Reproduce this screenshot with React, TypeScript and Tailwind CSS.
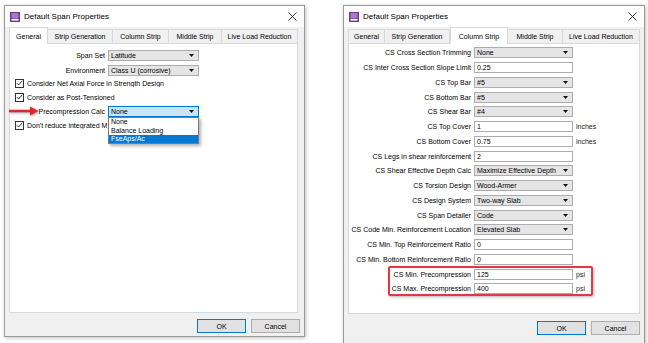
import React from "react";

const txt = "text-[7px] leading-none text-black";

function AppIcon() {
  return (
    <svg width="10" height="10" viewBox="0 0 10 10" className="flex-shrink-0">
      <rect x="0" y="0" width="10" height="10" fill="#6f3591" />
      <rect x="1.5" y="1" width="7" height="5.5" fill="#a57cc0" />
      <rect x="1.5" y="7" width="7" height="1.6" fill="#ffffff" />
    </svg>
  );
}

function CloseX() {
  return (
    <svg width="9" height="9" viewBox="0 0 9 9" className="flex-shrink-0">
      <path d="M0.5 0.5l8 8M8.5 0.5l-8 8" stroke="#222" strokeWidth="0.9" />
    </svg>
  );
}

function Caret() {
  return (
    <svg width="5" height="3" viewBox="0 0 5 3" className="flex-shrink-0">
      <path d="M0 0h5L2.5 3z" fill="#111" />
    </svg>
  );
}

function Select({
  value,
  w,
  focus,
}: {
  value: string;
  w: string;
  focus?: boolean;
}) {
  return (
    <div
      className={`flex h-[11px] items-center justify-between border pl-[2px] pr-[4px] ${
        focus ? "border-[#0078d7] bg-[#cce4f7]" : "border-[#adadad] bg-[#e5e5e5]"
      } ${w}`}
    >
      <span className={txt}>{value}</span>
      <Caret />
    </div>
  );
}

function TextBox({ value, w }: { value: string; w: string }) {
  return (
    <div className={`flex h-[11px] items-center border border-[#adadad] bg-white pl-[2px] ${w}`}>
      <span className={txt}>{value}</span>
    </div>
  );
}

function Checkbox({ label, clip }: { label: string; clip?: string }) {
  return (
    <div className="flex h-[12px] items-center gap-[3px] pl-[5px]">
      <div className="flex h-[9px] w-[9px] items-center justify-center border border-[#333] bg-white">
        <svg width="7" height="6" viewBox="0 0 7 6">
          <path d="M0.8 3.2l1.8 1.8L6.3 0.8" fill="none" stroke="#222" strokeWidth="0.9" />
        </svg>
      </div>
      <span className={`${txt} overflow-hidden whitespace-nowrap ${clip ?? ""}`}>{label}</span>
    </div>
  );
}

function TitleBar() {
  return (
    <div className="flex h-[21px] items-center bg-white pl-[5px] pr-[7px]">
      <AppIcon />
      <span className="ml-[4px] text-[8px] leading-none text-black">Default Span Properties</span>
      <div className="ml-auto">
        <CloseX />
      </div>
    </div>
  );
}

function Tabs({ tabs, active }: { tabs: [string, string][]; active: number }) {
  return (
    <div className="flex h-[16px] items-end">
      {tabs.map(([label, w], i) =>
        i === active ? (
          <div
            key={label}
            className={`relative z-10 -mb-px flex h-[17px] items-center justify-center border border-b-0 border-[#d9d9d9] bg-white ${w}`}
          >
            <span className={txt}>{label}</span>
          </div>
        ) : (
          <div
            key={label}
            className={`flex h-[14px] items-center justify-center border border-b-0 border-l-0 border-[#d9d9d9] bg-[#f0f0f0] first:border-l ${w}`}
          >
            <span className={`${txt} whitespace-nowrap`}>{label}</span>
          </div>
        )
      )}
    </div>
  );
}

function Button({ label, primary }: { label: string; primary?: boolean }) {
  return (
    <div
      className={`flex h-[14px] w-[49px] items-center justify-center bg-[#e1e1e1] ${
        primary ? "border-[1.5px] border-[#0078d7]" : "border border-[#adadad]"
      }`}
    >
      <span className={txt}>{label}</span>
    </div>
  );
}

function GeneralPanel() {
  const labelCls = `${txt} w-[95px] text-right whitespace-nowrap`;
  return (
    <div className="flex flex-col pt-[5px]">
      <div className="flex h-[12px] items-center gap-[3px]">
        <span className={labelCls}>Span Set</span>
        <Select value="Latitude" w="w-[91px]" />
      </div>
      <div className="mt-[3px] flex h-[12px] items-center gap-[3px]">
        <span className={labelCls}>Environment</span>
        <Select value="Class U (corrosive)" w="w-[91px]" />
      </div>
      <div className="mt-[1px]">
        <Checkbox label="Consider Net Axial Force in Strength Design" />
      </div>
      <div className="mt-[2px]">
        <Checkbox label="Consider as Post-Tensioned" />
      </div>
      <div className="relative z-20 mt-[2px] flex h-[12px] items-center gap-[3px]">
        {/* red annotation arrow */}
        <svg
          width="30"
          height="10"
          viewBox="0 0 30 10"
          className="absolute left-[-1px] top-[1px] drop-shadow-[1px_1px_1px_rgba(0,0,0,0.35)]"
        >
          <path d="M0 3.8h21V0.5L29.5 5 21 9.5V6.2H0z" fill="#e3262c" />
        </svg>
        <span className={labelCls}>Precompression Calc</span>
        <div className="relative">
          <Select value="None" w="w-[91px]" focus />
          <div className="absolute left-0 top-full w-[91px] border border-[#7a7a7a] bg-white shadow-[2px_2px_3px_rgba(0,0,0,0.3)]">
            <div className={`${txt} flex h-[8.5px] items-center pl-[2px]`}>None</div>
            <div className={`${txt} flex h-[8.5px] items-center pl-[2px]`}>Balance Loading</div>
            <div className="flex h-[8.5px] items-center bg-[#0078d7] pl-[2px] text-[7px] leading-none text-white">
              FseAps/Ac
            </div>
          </div>
        </div>
      </div>
      <div className="mt-[2px]">
        <Checkbox label="Don't reduce integrated Moments" clip="w-[80px]" />
      </div>
    </div>
  );
}

type Row = { label: string; kind: "select" | "text"; value: string; unit?: string };

const csRows: Row[] = [
  { label: "CS Cross Section Trimming", kind: "select", value: "None" },
  { label: "CS Inter Cross Section Slope Limit", kind: "text", value: "0.25" },
  { label: "CS Top Bar", kind: "select", value: "#5" },
  { label: "CS Bottom Bar", kind: "select", value: "#5" },
  { label: "CS Shear Bar", kind: "select", value: "#4" },
  { label: "CS Top Cover", kind: "text", value: "1", unit: "inches" },
  { label: "CS Bottom Cover", kind: "text", value: "0.75", unit: "inches" },
  { label: "CS Legs in shear reinforcement", kind: "text", value: "2" },
  { label: "CS Shear Effective Depth Calc", kind: "select", value: "Maximize Effective Depth" },
  { label: "CS Torsion Design", kind: "select", value: "Wood-Armer" },
  { label: "CS Design System", kind: "select", value: "Two-way Slab" },
  { label: "CS Span Detailer", kind: "select", value: "Code" },
  { label: "CS Code Min. Reinforcement Location", kind: "select", value: "Elevated Slab" },
  { label: "CS Min. Top Reinforcement Ratio", kind: "text", value: "0" },
  { label: "CS Min. Bottom Reinforcement Ratio", kind: "text", value: "0" },
];

const precompRows: Row[] = [
  { label: "CS Min. Precompression", kind: "text", value: "125", unit: "psi" },
  { label: "CS Max. Precompression", kind: "text", value: "400", unit: "psi" },
];

function CsRow({ row }: { row: Row }) {
  return (
    <div className="flex h-[14.75px] items-center">
      <span className={`${txt} w-[122px] text-right whitespace-nowrap`}>{row.label}</span>
      <div className="ml-[3px]">
        {row.kind === "select" ? (
          <Select value={row.value} w="w-[99px]" />
        ) : (
          <TextBox value={row.value} w="w-[99px]" />
        )}
      </div>
      {row.unit && <span className="ml-[3px] text-[7px] leading-none text-[#222]">{row.unit}</span>}
    </div>
  );
}

function ColumnStripPanel() {
  return (
    <div className="flex flex-col pt-[1.6px]">
      {csRows.map((r) => (
        <CsRow key={r.label} row={r} />
      ))}
      <div className="relative">
        <div className="absolute left-[39px] top-[-0.5px] bottom-[0.5px] w-[205px] rounded-[2px] border-2 border-[#e3383d] shadow-[1px_1px_3px_rgba(0,0,0,0.3)]" />
        {precompRows.map((r) => (
          <CsRow key={r.label} row={r} />
        ))}
      </div>
    </div>
  );
}

export default function App() {
  return (
    <div className="flex h-[343px] w-[648px] items-start overflow-hidden bg-white font-['Liberation_Sans',Arial,sans-serif]">
      {/* Left dialog: General tab */}
      <div className="ml-[4px] mt-[5px] flex h-[332px] w-[301px] flex-shrink-0 flex-col border border-[#9a9a9a] bg-[#f0f0f0] shadow-[1px_1px_4px_rgba(0,0,0,0.25)]">
        <TitleBar />
        <div className="ml-[4px] mr-[6px] flex flex-1 flex-col">
          <Tabs
            active={0}
            tabs={[
              ["General", "w-[39px]"],
              ["Strip Generation", "w-[65px]"],
              ["Column Strip", "w-[56px]"],
              ["Middle Strip", "w-[53px]"],
              ["Live Load Reduction", "flex-1"],
            ]}
          />
          <div className="h-[270px] border border-[#d9d9d9] bg-white">
            <GeneralPanel />
          </div>
          <div className="flex justify-end gap-[5px] pt-[6px] mr-[-2px]">
            <Button label="OK" primary />
            <Button label="Cancel" />
          </div>
        </div>
      </div>

      {/* Right dialog: Column Strip tab */}
      <div className="ml-[38px] mt-[5px] flex h-[345px] w-[302px] flex-shrink-0 flex-col border border-[#9a9a9a] bg-[#f0f0f0] shadow-[1px_1px_4px_rgba(0,0,0,0.25)]">
        <TitleBar />
        <div className="mx-[4px] flex flex-1 flex-col">
          <Tabs
            active={2}
            tabs={[
              ["General", "w-[37px]"],
              ["Strip Generation", "w-[65px]"],
              ["Column Strip", "w-[58px]"],
              ["Middle Strip", "w-[55px]"],
              ["Live Load Reduction", "flex-1"],
            ]}
          />
          <div className="h-[271px] border border-[#d9d9d9] bg-white">
            <ColumnStripPanel />
          </div>
          <div className="flex justify-end gap-[5px] pt-[7px]">
            <Button label="OK" primary />
            <Button label="Cancel" />
          </div>
        </div>
      </div>
    </div>
  );
}
